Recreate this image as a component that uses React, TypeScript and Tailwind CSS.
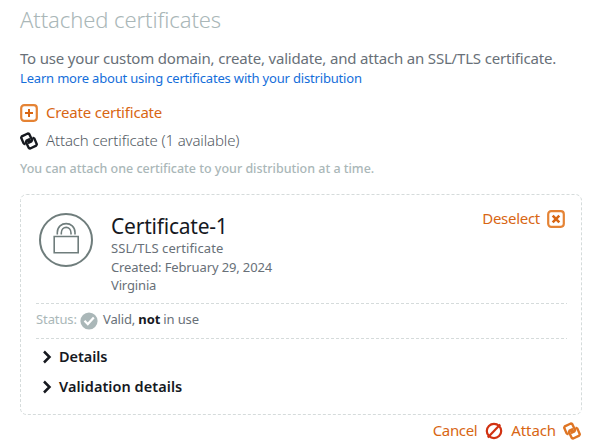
import React from "react";

function LinkIcon({ className, color }: { className: string; color: string }) {
  return (
    <svg viewBox="0 0 18 18" className={className} fill="none" stroke={color} strokeWidth="2.4" strokeLinejoin="round">
      <path d="M5.6 12.3L3.6 11.4L1.2 5.8L1.8 4.4L7.8 1.5L9.2 2L12.1 8L11.5 9.4L8.8 10.7L7.9 8.8" />
      <path d="M12.4 5.7L14.4 6.6L16.8 12.2L16.2 13.6L10.2 16.5L8.8 16L5.9 10L6.5 8.6L9.2 7.3L10.1 9.2" />
    </svg>
  );
}

function BoxIcon({ path, width }: { path: string; width: number }) {
  return (
    <svg viewBox="0 0 18 18" className="size-[18px] shrink-0" fill="none">
      <rect x="1.2" y="1.2" width="15.6" height="15.6" rx="3" stroke="#e58334" strokeWidth="2.2" />
      <path d={path} stroke="#d86613" strokeWidth={width} />
    </svg>
  );
}

function Disclosure({ label, className }: { label: string; className: string }) {
  return (
    <button className="flex h-[30px] items-center pl-[6px] text-[#16191f]">
      <svg viewBox="0 0 10 14" className="mr-[7px] h-[14px] w-[10px]" fill="none">
        <path d="M2 1.5L7.5 7L2 12.5" stroke="#16191f" strokeWidth="2.5" />
      </svg>
      <span className={`text-[14.5px] font-semibold ${className}`}>{label}</span>
    </button>
  );
}

export default function App() {
  return (
    <main className="h-[447px] w-[610px] overflow-hidden bg-white pl-[20px] font-['Noto_Sans','Open_Sans',sans-serif] whitespace-nowrap text-[#687078]">
      <h1 className="h-[48px] pt-[3px] text-[22px] leading-[32px] font-light tracking-[-0.08px] text-[#aab7b8]">Attached certificates</h1>
      <p className="h-[20px] text-[15px] leading-[20px] tracking-[-0.18px]">
        To use your custom domain, create, validate, and attach an SSL/TLS certificate.
      </p>
      <a className="block h-[20px] text-[13px] leading-[20px] tracking-[-0.18px] text-[#146eda]">
        Learn more about using certificates with your distribution
      </a>
      <div className="mt-[11px] flex h-[28px] items-center gap-[8px] text-[#d86613]">
        <BoxIcon path="M9 5V13M5 9H13" width={2} />
        <span className="-mt-px text-[15px] tracking-[-0.2px]">Create certificate</span>
      </div>
      <div className="flex h-[28px] items-center gap-[8px]">
        <LinkIcon className="size-[18px]" color="#16191f" />
        <span className="-mt-px text-[15px] font-light tracking-[-0.13px] text-[#545b64]">Attach certificate (1 available)</span>
      </div>
      <p className="h-[39px] pt-[4px] text-[12.5px] leading-[20px] font-medium tracking-[-0.02px] text-[#aab7b8]">
        You can attach one certificate to your distribution at a time.
      </p>

      <section className="relative h-[221px] w-[562px] pr-[17px] pl-[16px]">
        <svg className="pointer-events-none absolute inset-0 size-full" fill="none" stroke="#d5dbdb" strokeDasharray="3 2">
          <rect x="0.5" y="0.5" width="561" height="220" rx="6" />
          <path d="M16 109.5H547M16 144.5H547" />
        </svg>
        <div className="flex h-[109px] items-start">
          <svg viewBox="0 0 56 56" className="mt-[18px] ml-[2px] size-[56px]" fill="none" stroke="#6f7d7c" strokeWidth="1.6">
            <circle cx="28" cy="28" r="26" strokeWidth="2" />
            <path d="M16.2 24.5H40.2V40.8H16.2Z" />
            <path d="M19.3 22.5V20.5C19.3 8.6 37 8.6 37 20.5V22.5M23.3 22.5V21C23.3 13.5 33 13.5 33 21V22.5" />
          </svg>
          <div className="pt-[20px] pl-[17px]">
            <h2 className="h-[25px] text-[21px] leading-[25px] tracking-[-0.22px] text-[#16191f]">Certificate-1</h2>
            <div className="text-[13px] leading-[18.5px]">
              <p className="tracking-[0.08px]">SSL/TLS certificate</p>
              <p className="tracking-[-0.13px]">Created: February 29, 2024</p>
              <p className="tracking-[-0.15px]">Virginia</p>
            </div>
          </div>
          <button className="mt-[16px] ml-auto flex h-[18px] items-center gap-[7px] text-[#d86613]">
            <span className="-mt-px text-[15px] tracking-[-0.28px]">Deselect</span>
            <BoxIcon path="M5.7 5.7L12.3 12.3M12.3 5.7L5.7 12.3" width={2.6} />
          </button>
        </div>
        <div className="flex h-[35px] items-center text-[13px]">
          <span className="-mt-px w-[44px] tracking-[-0.1px] text-[#aab7b8]">Status:</span>
          <svg viewBox="0 0 18 18" className="mr-[5px] size-[18px]" fill="none">
            <circle cx="9" cy="9" r="8.6" fill="#aab7b8" />
            <path d="M4.5 8.8L7.8 12.1L13.8 5.6" stroke="#fff" strokeWidth="2.2" />
          </svg>
          <span className="-mt-[2px] tracking-[-0.15px]">
            Valid, <b className="font-bold text-[#16191f]">not</b> in use
          </span>
        </div>
        <div className="pt-[4px]">
          <Disclosure label="Details" className="tracking-[-0.05px]" />
          <Disclosure label="Validation details" className="tracking-[0.05px]" />
        </div>
      </section>

      <footer className="flex h-[32px] w-[561px] items-center justify-end text-[15px] text-[#d86613]">
        <span className="-mt-px tracking-[-0.35px]">Cancel</span>
        <svg viewBox="0 0 18 18" className="mx-[8px] size-[18px]" fill="none" stroke="#d13212" strokeWidth="2.2">
          <circle cx="9" cy="9" r="7.2" />
          <path d="M2.8 15.6L15.2 2.4" />
        </svg>
        <span className="-mt-px tracking-[-0.1px]">Attach</span>
        <LinkIcon className="ml-[7px] size-[18px]" color="#df7524" />
      </footer>
    </main>
  );
}
